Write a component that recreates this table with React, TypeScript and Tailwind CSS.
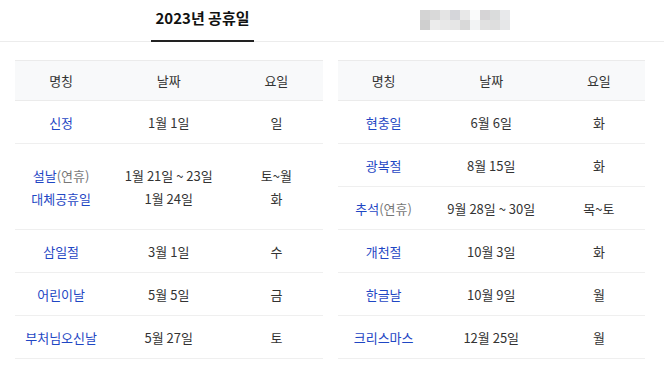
import React from 'react';

type Holiday = {
  name: string;
  note?: string;
  date: string;
  day: string;
};

type Row = Holiday[];

const leftRows: Row[] = [
  [{ name: '신정', date: '1월 1일', day: '일' }],
  [
    { name: '설날', note: '(연휴)', date: '1월 21일 ~ 23일', day: '토~월' },
    { name: '대체공휴일', date: '1월 24일', day: '화' },
  ],
  [{ name: '삼일절', date: '3월 1일', day: '수' }],
  [{ name: '어린이날', date: '5월 5일', day: '금' }],
  [{ name: '부처님오신날', date: '5월 27일', day: '토' }],
];

const rightRows: Row[] = [
  [{ name: '현충일', date: '6월 6일', day: '화' }],
  [{ name: '광복절', date: '8월 15일', day: '화' }],
  [{ name: '추석', note: '(연휴)', date: '9월 28일 ~ 30일', day: '목~토' }],
  [{ name: '개천절', date: '10월 3일', day: '화' }],
  [{ name: '한글날', date: '10월 9일', day: '월' }],
  [{ name: '크리스마스', date: '12월 25일', day: '월' }],
];

// pixelated block standing in for the blurred second tab
const blurBlocks = [
  ['#d4d4d4', '#d9d9d9', '#e4e4e4', '#d5d6da', '#e8e8e8', '#fafbfb', '#d6d4d6', '#dadcdc', '#e8e9eb'],
  ['#cfcfcf', '#ececec', '#e8e8e8', '#e6e6e6', '#d9d9d9', '#f2f3f4', '#e1e1e1', '#dedede', '#e6e7e8'],
];

const HolidayTable: React.FC<{ rows: Row[] }> = ({ rows }) => (
  <table className="w-full table-fixed border-collapse text-[13px] text-[#333]">
    <colgroup>
      <col className="w-[30%]" />
      <col className="w-[40%]" />
      <col className="w-[30%]" />
    </colgroup>
    <thead>
      <tr className="h-[40px] bg-[#f8f9fa] border-t border-b border-[#ebebeb]">
        <th className="font-normal">명칭</th>
        <th className="font-normal">날짜</th>
        <th className="font-normal">요일</th>
      </tr>
    </thead>
    <tbody>
      {rows.map((row, i) => (
        <tr key={i} className="border-b border-[#efefef]" style={{ height: row.length * 43 }}>
          <td className="text-center leading-[23px]">
            {row.map((h) => (
              <div key={h.name}>
                <span className="text-[#1f47c4]">{h.name}</span>
                {h.note && <span className="text-[#777]">{h.note}</span>}
              </div>
            ))}
          </td>
          <td className="text-center leading-[23px]">
            {row.map((h) => (
              <div key={h.name}>{h.date}</div>
            ))}
          </td>
          <td className="text-center leading-[23px]">
            {row.map((h) => (
              <div key={h.name}>{h.day}</div>
            ))}
          </td>
        </tr>
      ))}
    </tbody>
  </table>
);

export default function App() {
  return (
    <div
      className="w-[664px] h-[381px] bg-white overflow-hidden"
      style={{ fontFamily: '"Noto Sans CJK KR", "Noto Sans", sans-serif' }}
    >
      {/* Tabs */}
      <div className="flex h-[42px] border-b border-[#ececec]">
        <div className="w-[151px]" />
        <div className="w-[103px] h-[42px] flex items-center justify-center border-b-2 border-[#222] text-[15px] font-bold text-[#111] -mb-px pb-[3px]">
          2023년 공휴일
        </div>
        <div className="w-[166px]" />
        <div className="flex flex-col mt-[10px]">
          {blurBlocks.map((line, i) => (
            <div key={i} className="flex">
              {line.map((c, j) => (
                <div key={j} className="w-[10px] h-[10px]" style={{ backgroundColor: c }} />
              ))}
            </div>
          ))}
        </div>
      </div>

      {/* Tables */}
      <div className="flex gap-[15px] pl-[15px] pr-[19px] pt-[18px]">
        <div className="flex-1">
          <HolidayTable rows={leftRows} />
        </div>
        <div className="flex-1">
          <HolidayTable rows={rightRows} />
        </div>
      </div>
    </div>
  );
}
